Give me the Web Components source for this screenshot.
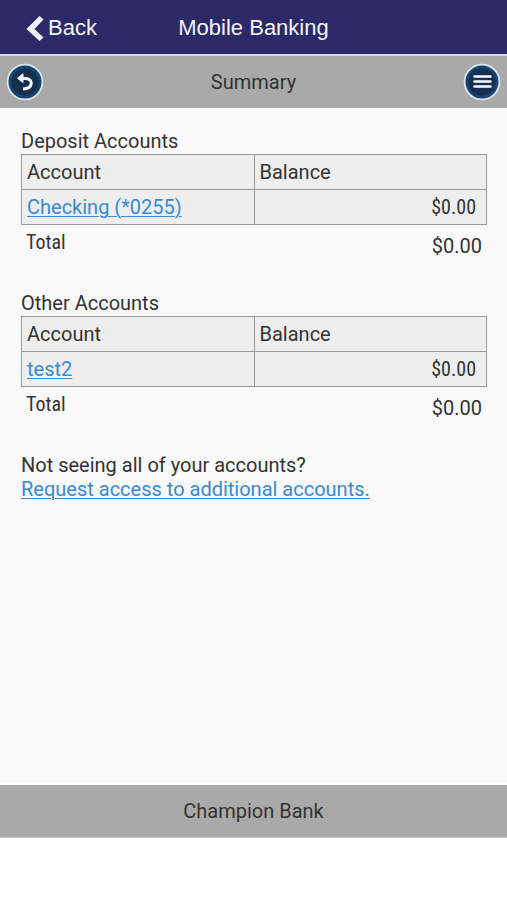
<!DOCTYPE html>
<html lang="en">
<head>
<meta charset="utf-8">
<meta name="viewport" content="width=device-width, initial-scale=1">
<title>Mobile Banking</title>
<style>
html,body{margin:0;height:100%}
body{background:#fff;color:#333;font-family:Roboto,sans-serif}
</style>
</head>
<body>
<banking-app></banking-app>
<script>
class AppHeader extends HTMLElement{
  constructor(){super();this.attachShadow({mode:'open'}).innerHTML=`
<style>
:host{display:grid;grid-template-columns:1fr auto 1fr;align-items:center;padding:15px 0 13px;background:#2b2967;color:#f4f4fc;border-bottom:2px solid #d5d9e8;font:22px/26px "Liberation Sans",Arial,sans-serif}
button{all:unset;display:flex;align-items:center;gap:4px;padding-left:26px;cursor:pointer;justify-self:start}
h1{margin:0;font:inherit}
svg{display:block}
</style>
<button type="button"><svg width="18" height="26" viewBox="0 0 18 26" aria-hidden="true"><path d="M13.5 1L17.5 4.5L8.5 14L17.5 22.5L13.5 26L.5 14Z" fill="#f2f5fd"/></svg>Back</button>
<h1><slot></slot></h1>`}
}
class RoundButton extends HTMLElement{
  constructor(){super();
    const menu=this.getAttribute('icon')==='menu';
    const art=menu
      ?'<path d="M11.5 13.5h16M11.5 18.5h16M11.5 23.5h16" stroke="#f7faff" stroke-width="2.6" stroke-linecap="round"/>'
      :'<path d="M15 15.5H20C27.5 16 27.5 25.5 17 26" fill="none" stroke="#f7faff" stroke-width="3"/><path d="M11.5 15.2L17 10.8V19.6Z" fill="#f7faff" stroke="#f7faff" stroke-linejoin="round"/>';
    this.attachShadow({mode:'open'}).innerHTML=`
<style>
:host{display:block}
button{all:unset;display:block;cursor:pointer}
svg{display:block}
</style>
<button type="button" aria-label="${menu?'Menu':'Go back'}"><svg width="38" height="38" viewBox="0 0 38 38" aria-hidden="true"><circle cx="19" cy="19" r="17.4" fill="#18456f" stroke="#dce5ee" stroke-width="1.8"/><circle cx="19" cy="19" r="13.5" fill="#15304f"/>${art}</svg></button>`}
}
class TitleBar extends HTMLElement{
  constructor(){super();this.attachShadow({mode:'open'}).innerHTML=`
<style>
:host{display:grid;grid-template-columns:38px 1fr 38px;align-items:center;padding:7px 6px;background:#a9a9a9;text-align:center}
h2{margin:0;font-size:20px;line-height:24px;font-weight:400}
</style>
<round-button icon="back"></round-button><h2><slot></slot></h2><round-button icon="menu"></round-button>`}
}
class AccountTable extends HTMLElement{
  constructor(){super();this.attachShadow({mode:'open'}).innerHTML=`
<style>
:host{display:block;font-size:20px;line-height:24px}
h3{margin:0 0 1px;font:inherit}
table{width:100%;border-collapse:collapse;table-layout:fixed;background:#eee}
th,td{border:1px solid #999;padding:5px;text-align:left;font-weight:400;vertical-align:top}
td:last-child{text-align:right;padding-right:10px}
td:last-child,.total span{font-family:"Roboto Condensed",Roboto,sans-serif}
a{color:#388bce;text-decoration:underline;text-underline-offset:2px;text-decoration-thickness:1px}
.total{display:flex;justify-content:space-between;padding:5px 5px 0}
.total strong{font-weight:400;padding-top:4px}
</style>
<h3>${this.getAttribute('heading')}</h3>
<table><thead><tr><th scope="col">Account</th><th scope="col">Balance</th></tr></thead>
<tbody><tr><td><a href="#account"><slot></slot></a></td><td>$0.00</td></tr></tbody></table>
<div class="total"><span>Total</span><strong>$0.00</strong></div>`}
}
class AccessPrompt extends HTMLElement{
  constructor(){super();this.attachShadow({mode:'open'}).innerHTML=`
<style>
:host{display:block;font-size:20px;line-height:24px}
p{margin:0}
a{color:#388bce;text-decoration:underline;text-underline-offset:2px;text-decoration-thickness:1px}
</style>
<p>Not seeing all of your accounts?</p><a href="#request">Request access to additional accounts.</a>`}
}
class BankFooter extends HTMLElement{
  constructor(){super();this.attachShadow({mode:'open'}).innerHTML=`
<style>
:host{display:block;background:#a9a9a9;border-bottom:1px solid #c8c8c8;padding:14px;text-align:center;font-size:20px;line-height:24px}
</style><slot></slot>`}
}
class BankingApp extends HTMLElement{
  constructor(){super();this.attachShadow({mode:'open'}).innerHTML=`
<style>
:host{display:flex;flex-direction:column;min-height:100vh;box-sizing:border-box;padding-bottom:62px}
main{flex:1;display:flex;flex-direction:column;gap:33px;background:#f9f9f9;border-bottom:2px solid #fff;padding:21px 20px 21px 21px}
</style>
<app-header>Mobile Banking</app-header>
<title-bar>Summary</title-bar>
<main>
<account-table heading="Deposit Accounts">Checking (*0255)</account-table>
<account-table heading="Other Accounts">test2</account-table>
<access-prompt></access-prompt>
</main>
<bank-footer>Champion Bank</bank-footer>`}
}
customElements.define('app-header',AppHeader);
customElements.define('round-button',RoundButton);
customElements.define('title-bar',TitleBar);
customElements.define('account-table',AccountTable);
customElements.define('access-prompt',AccessPrompt);
customElements.define('bank-footer',BankFooter);
customElements.define('banking-app',BankingApp);
</script>
</body>
</html>
